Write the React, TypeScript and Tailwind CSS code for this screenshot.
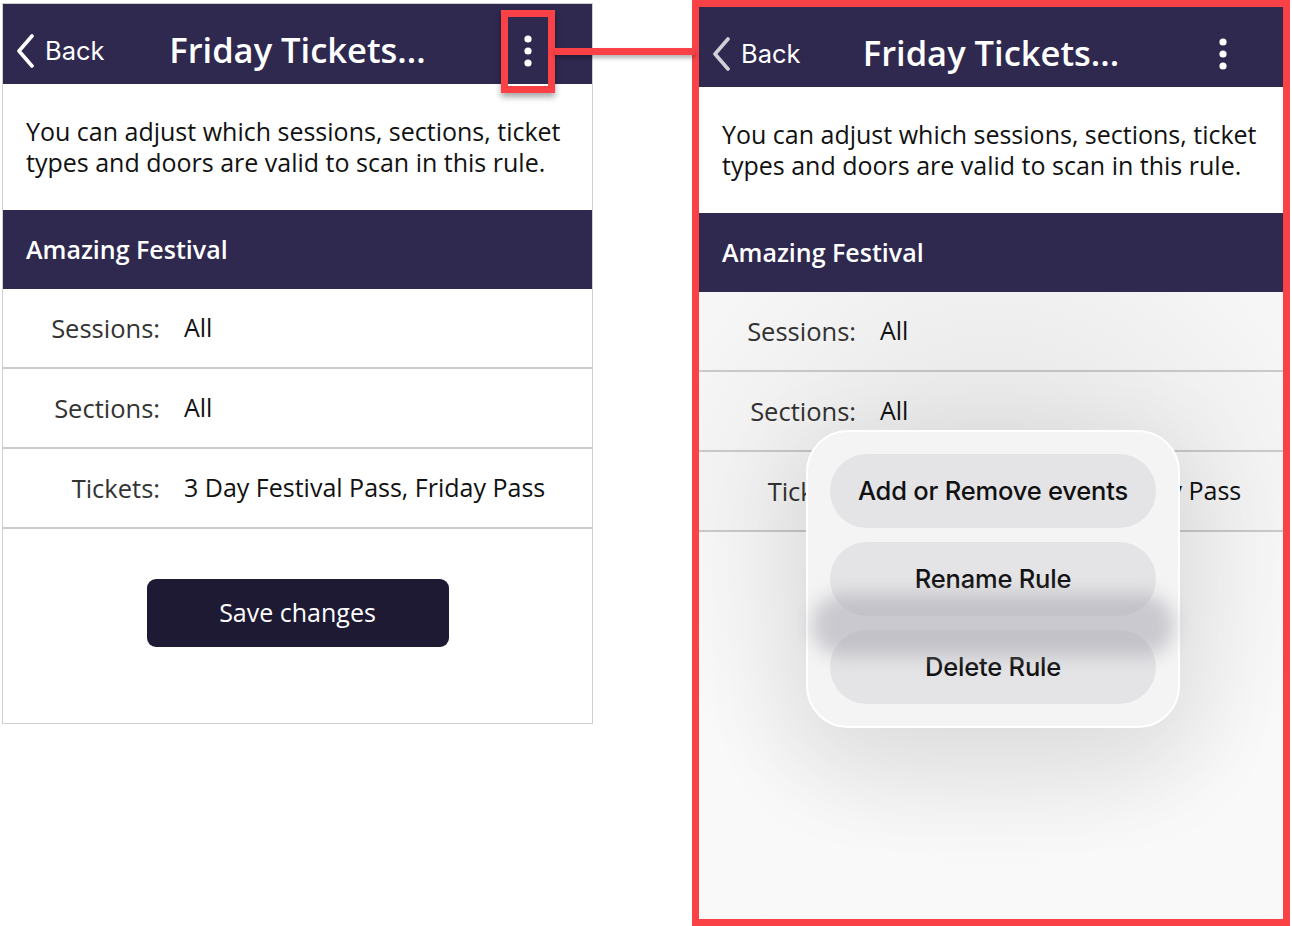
import React from 'react';

type Row = { label: string; value: string };

const rows: Row[] = [
  { label: 'Sessions:', value: 'All' },
  { label: 'Sections:', value: 'All' },
  { label: 'Tickets:', value: '3 Day Festival Pass, Friday Pass' },
];

function Chevron({ color }: { color: string }) {
  return (
    <svg width="22" height="34" viewBox="0 0 22 34" fill="none">
      <path d="M17 2 L4 17 L17 32" stroke={color} strokeWidth="3.6" strokeLinecap="round" strokeLinejoin="round" />
    </svg>
  );
}

function Kebab() {
  return (
    <svg width="10" height="32" viewBox="0 0 10 32" fill="white">
      <circle cx="5" cy="4" r="3.6" />
      <circle cx="5" cy="16" r="3.6" />
      <circle cx="5" cy="28" r="3.6" />
    </svg>
  );
}

function Screen({ dimmed }: { dimmed?: boolean }) {
  return (
    <div className="relative flex flex-col h-full font-['Open_Sans',sans-serif]">
      {/* Header */}
      <div className="relative flex items-center h-[80px] pt-[13px] bg-[#2f2950] text-white shrink-0">
        <div className="flex items-center gap-[8px] pl-[12px]">
          <Chevron color={dimmed ? '#cfcfd6' : '#ffffff'} />
          <span className="text-[25.5px] leading-none font-['Inter',sans-serif]">Back</span>
        </div>
        <div className="absolute inset-x-0 top-[13px] bottom-0 flex items-center justify-center text-[34.5px] font-semibold leading-none">
          Friday Tickets...
        </div>
        <div className={`ml-auto flex ${dimmed ? 'mr-[55px]' : 'mr-[59px]'}`}>
          <Kebab />
        </div>
      </div>

      {/* Description */}
      <div className="h-[126px] flex items-center px-[23px] bg-white shrink-0">
        <p className="text-[25px] leading-[31px] text-[#111]">
          You can adjust which sessions, sections, ticket types and doors are valid to scan in this rule.
        </p>
      </div>

      {/* Event band */}
      <div className="h-[79px] flex items-center px-[23px] bg-[#2f2950] shrink-0">
        <span className="text-white text-[25px] font-semibold">Amazing Festival</span>
      </div>

      {/* Rows */}
      <div className={dimmed ? 'bg-[#f7f7f7]' : 'bg-white'}>
        {rows.map((r) => (
          <div key={r.label} className="h-[80px] flex items-center border-b-2 border-[#cbcbcb]">
            <span className="w-[157px] text-right text-[25.5px] text-[#333]">{r.label}</span>
            <span className="ml-[24px] text-[25px] text-[#111]">{r.value}</span>
          </div>
        ))}
      </div>

      <div className={`flex-1 ${dimmed ? 'bg-[#fafafa]' : 'bg-white'}`}>
        {!dimmed && (
          <div className="flex justify-center pt-[50px]">
            <button className="w-[302px] h-[68px] rounded-[9px] bg-[#1e1a33] text-white text-[25px]">
              Save changes
            </button>
          </div>
        )}
      </div>

      {dimmed && (
        <>
          {/* dim overlay */}
          <div className="pointer-events-none absolute left-0 right-0 top-[285px] bottom-0 bg-[radial-gradient(ellipse_60%_55%_at_50%_38%,rgba(0,0,0,0.085),rgba(0,0,0,0.03)_65%,rgba(0,0,0,0.005)_100%)]" />
          {/* context menu */}
          <div className="absolute left-[107px] top-[423px] w-[374px] h-[298px] rounded-[42px] bg-[#f4f4f4] border-2 border-white shadow-[0_30px_90px_20px_rgba(0,0,0,0.08)] flex flex-col gap-[14px] px-[22px] py-[22px] font-['Inter',sans-serif]">
            {['Add or Remove events', 'Rename Rule', 'Delete Rule'].map((t) => (
              <div key={t} className="h-[74px] rounded-full bg-[#e4e4e6] flex items-center justify-center text-[25.5px] font-medium text-[#111] tracking-[-0.2px]">
                {t}
              </div>
            ))}
            <div className="pointer-events-none absolute left-[4px] right-[4px] top-[162px] h-[62px] bg-[#a7a6b0]/55 blur-[9px] rounded-[30px]" />
          </div>
        </>
      )}
    </div>
  );
}

export default function App() {
  return (
    <div className="relative w-[1292px] h-[926px] bg-white flex items-start overflow-hidden">
      <div className="ml-[2px] mt-[3px] w-[591px] h-[721px] border border-[#cfcfcf] overflow-hidden">
        <Screen />
      </div>

      <div className="ml-[99px] w-[598px] h-[926px] border-[7px] border-[#fa4246] overflow-hidden">
        <Screen dimmed />
      </div>

      {/* annotation: highlight box + connector */}
      <div className="absolute left-[501px] top-[10px] w-[54px] h-[83px] border-[7px] border-[#fa4246] shadow-[0_4px_6px_rgba(0,0,0,0.35)]" />
      <div className="absolute left-[555px] top-[48px] w-[140px] h-[7px] bg-[#fa4246] shadow-[0_3px_4px_rgba(0,0,0,0.3)]" />
    </div>
  );
}
